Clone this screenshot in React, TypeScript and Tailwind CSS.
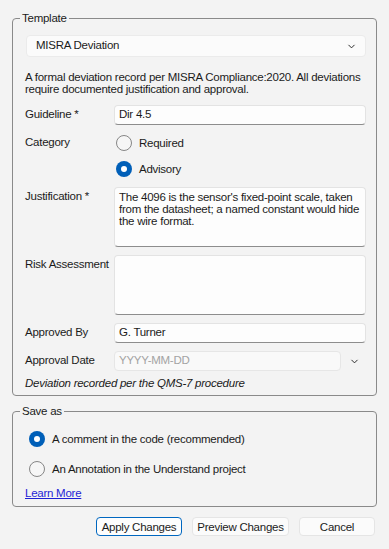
import { ChevronDown } from "lucide-react";

function Radio({ checked, label }: { checked: boolean; label: string }) {
  return (
    <div className="flex items-center h-[20px] gap-[7px]">
      {checked ? (
        <span className="w-[16px] h-[16px] rounded-full bg-[#005fb8] flex items-center justify-center shrink-0">
          <span className="w-[6px] h-[6px] rounded-full bg-white" />
        </span>
      ) : (
        <span className="w-[16px] h-[16px] rounded-full border border-[#868686] bg-[#f6f6f6] shrink-0" />
      )}
      <span className="leading-[14px] whitespace-nowrap">{label}</span>
    </div>
  );
}

function Label({ children }: { children: React.ReactNode }) {
  return <div className="pt-[2px] leading-[14px] whitespace-nowrap">{children}</div>;
}

const box =
  "bg-[#fdfdfd] border border-[#e3e3e3] border-b-[#8d8d8d] rounded-[4px]";

export default function App() {
  return (
    <div className="w-[389px] h-[549px] bg-[#f3f3f3] pt-[11px] font-['Liberation_Sans',Arial,sans-serif] text-[11.5px] tracking-[-0.25px] text-[#1b1b1b]">
      <fieldset className="mx-[12px] border border-[#8a8a8a] rounded-[4px] pl-[12px] pr-[10px] pt-[10px] pb-[6px]">
        <legend className="-ml-[5px] px-[2px] leading-[14px]">Template</legend>

        <div className="ml-[1px] h-[22px] flex items-center justify-between pl-[9px] pr-[8px] bg-[#fbfbfb] border border-[#ebebeb] rounded-[4px]">
          <span>MISRA Deviation</span>
          <ChevronDown size={11} strokeWidth={2} />
        </div>

        <p className="mt-[14px] leading-[12px]">
          A formal deviation record per MISRA Compliance:2020. All deviations
          require documented justification and approval.
        </p>

        <div className="mt-[10px] grid grid-cols-[89px_1fr] gap-y-[8px]">
          <Label>Guideline *</Label>
          <div className={`h-[20px] flex items-center px-[4px] ${box}`}>Dir 4.5</div>

          <Label>Category</Label>
          <div className="flex flex-col gap-[6px] pl-[2px]">
            <Radio checked={false} label="Required" />
            <Radio checked={true} label="Advisory" />
          </div>

          <Label>Justification *</Label>
          <div className={`h-[60px] px-[4px] pt-[3px] leading-[12px] whitespace-pre overflow-hidden ${box}`}>
            {"The 4096 is the sensor's fixed-point scale, taken\nfrom the datasheet; a named constant would hide\nthe wire format."}
          </div>

          <Label>Risk Assessment</Label>
          <div className={`h-[60px] ${box}`} />

          <Label>Approved By</Label>
          <div className={`h-[20px] flex items-center px-[4px] ${box}`}>G. Turner</div>

          <Label>Approval Date</Label>
          <div className="flex items-center">
            <div className="flex-1 h-[20px] flex items-center px-[4px] bg-[#f9f9f9] border border-[#e6e6e6] rounded-[4px] text-[#a3a3a3]">
              YYYY-MM-DD
            </div>
            <div className="w-[25px] flex justify-center pl-[2px]">
              <ChevronDown size={11} strokeWidth={2} />
            </div>
          </div>
        </div>

        <p className="mt-[6px] italic leading-[12px]">
          Deviation recorded per the QMS-7 procedure
        </p>
      </fieldset>

      <fieldset className="mx-[12px] mt-[8px] border border-[#8a8a8a] rounded-[4px] pl-[16px] pr-[10px] pt-[11px] pb-[6px]">
        <legend className="-ml-[9px] px-[2px] leading-[14px]">Save as</legend>
        <div className="flex flex-col gap-[10px]">
          <Radio checked={true} label="A comment in the code (recommended)" />
          <Radio checked={false} label="An Annotation in the Understand project" />
        </div>
        <a href="#" className="block w-fit -ml-[4px] mt-[7px] leading-[14px] text-[#1f1fd6] underline">
          Learn More
        </a>
      </fieldset>

      <div className="mt-[10px] mr-[14px] flex justify-end gap-[10px]">
        <button className="w-[86px] h-[19px] rounded-[4px] border border-[#0067c0] bg-[#fdfdfd] leading-[14px]">
          Apply Changes
        </button>
        <button className="w-[97px] h-[19px] rounded-[4px] border border-[#e5e5e5] bg-[#fbfbfb] leading-[14px]">
          Preview Changes
        </button>
        <button className="w-[76px] h-[19px] rounded-[4px] border border-[#e5e5e5] bg-[#fbfbfb] leading-[14px]">
          Cancel
        </button>
      </div>
    </div>
  );
}
